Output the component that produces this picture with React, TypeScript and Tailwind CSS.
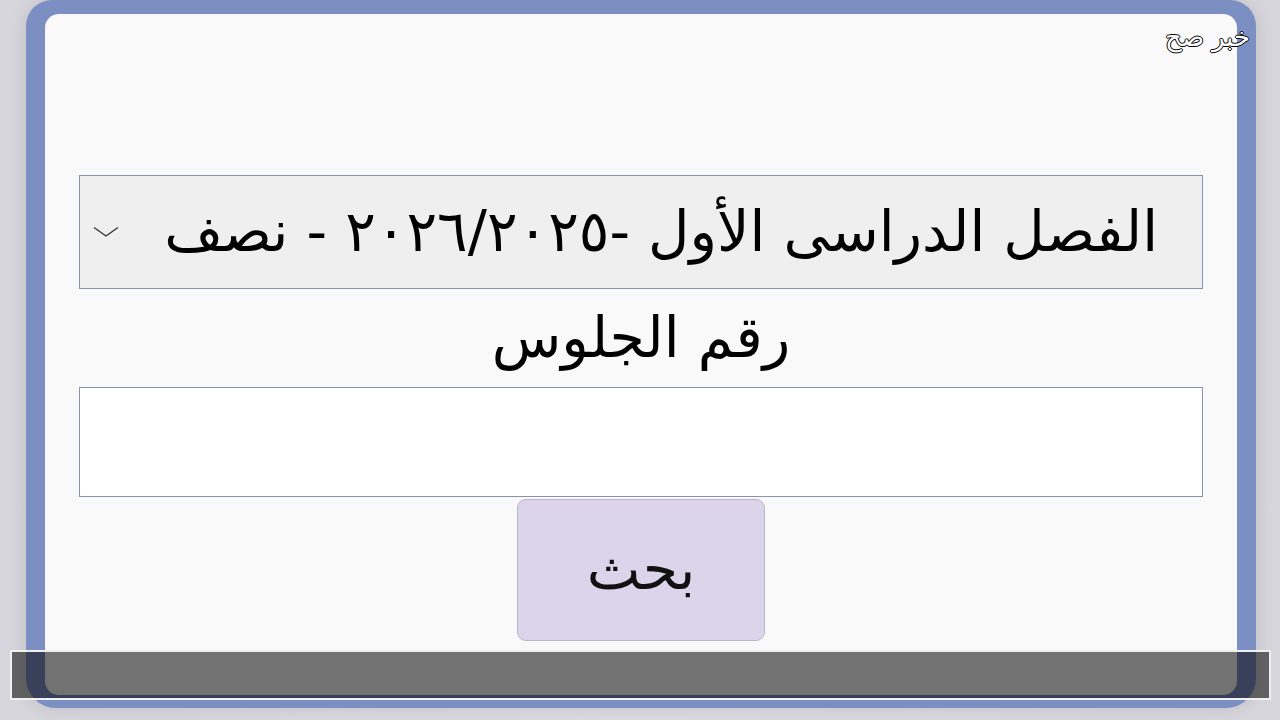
const arabic = { fontFamily: '"DejaVu Sans", "Noto Sans", sans-serif' };

export default function App() {
  return (
    <div
      className="relative w-[1280px] h-[720px] overflow-hidden bg-gradient-to-r from-[#d6d6dc] via-[#dcdce2] to-[#d6d6dc]"
      style={arabic}
    >
      {/* Blue frame */}
      <div className="ml-[26px] w-[1230px] h-[708px] rounded-b-[30px] rounded-t-[26px] bg-[#7b8fc2] pt-[14px] px-[19px] pb-[13px] shadow-[0_0_18px_rgba(0,0,0,0.12)]">
        {/* Card */}
        <div dir="rtl" className="h-full rounded-[14px] bg-[#f9f9f9] px-[34px] pt-[161px] flex flex-col">
          {/* Term select */}
          <div className="h-[114px] border-[1.5px] border-[#8a91b4] bg-[#efefef] flex items-center pr-[44px] pl-[13px] gap-[38px]">
            <div className="flex-1 whitespace-nowrap text-[57px] leading-normal text-black">
              الفصل الدراسى الأول -٢٠٢٦/٢٠٢٥ - نصف
            </div>
            <svg width="26" height="12" viewBox="0 0 26 12" fill="none" className="shrink-0">
              <polyline points="1,1.5 13,10 25,1.5" stroke="#333" strokeWidth="1.4" />
            </svg>
          </div>

          {/* Seat number label */}
          <div className="h-[98px] flex items-center justify-center text-[57px] text-black">
            رقم الجلوس
          </div>

          {/* Seat number input */}
          <input
            type="text"
            className="h-[110px] border-[1.5px] border-[#8a91b4] bg-white outline-none px-4 text-[40px]"
          />

          {/* Search button */}
          <div className="flex justify-center mt-[2px]">
            <button className="w-[248px] h-[142px] rounded-[9px] border-[1.5px] border-[#b9b5cc] bg-[#dcd4ea] text-[57px] text-[#111]">
              بحث
            </button>
          </div>
        </div>
      </div>

      {/* Watermark */}
      <div
        dir="rtl"
        className="absolute right-[30px] top-[18px] text-[26px] font-light text-white [text-shadow:-1px_0_0_#000,1px_0_0_#000,0_-1px_0_#000,0_1px_0_#000]"
      >
        خبر صح
      </div>

      {/* Caption bar */}
      <div className="absolute left-[10px] top-[650px] w-[1261px] h-[50px] border-2 border-[#f0f0f0] bg-black/[0.54]" />
    </div>
  );
}
